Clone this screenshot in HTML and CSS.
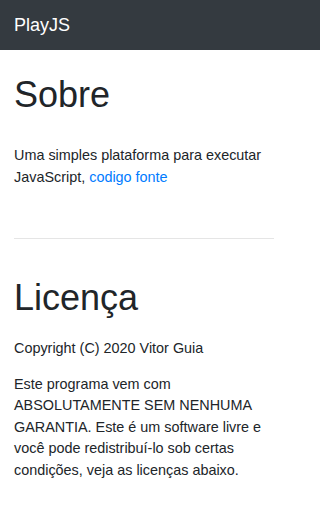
FILE: index.html
```html
<!DOCTYPE html>
<html lang="pt">
<head>
<meta charset="utf-8">
<meta name="viewport" content="width=device-width, initial-scale=1">
<link rel="stylesheet" href="styles.css">
</head>
<body>
<nav class="navbar"><div class="navbar-inner"><span class="brand">PlayJS</span></div></nav>
<main class="content">
  <section class="about">
    <h1 class="title">Sobre</h1>
    <p class="text">Uma simples plataforma para executar JavaScript, <a class="link" href="#">codigo fonte</a></p>
  </section>
  <hr class="divider">
  <section class="license">
    <h1 class="title">Licença</h1>
    <p class="text copyright">Copyright (C) 2020 Vitor Guia</p>
    <p class="text">Este programa vem com ABSOLUTAMENTE SEM NENHUMA GARANTIA. Este é um software livre e você pode redistribuí-lo sob certas condições, veja as licenças abaixo.</p>
  </section>
</main>
</body>
</html>
```
FILE: styles.css
```css
* { box-sizing: border-box; }
html, body { margin: 0; padding: 0; }
body {
  font-family: "Liberation Sans", Arial, sans-serif;
  font-size: 14.4px;
  line-height: 21.6px;
  color: #212529;
  background: #fff;
}
.navbar {
  height: 50px;
  background: #343a40;
}
.navbar-inner {
  width: 288px;
  height: 100%;
  display: flex;
  align-items: center;
  padding: 0 14px;
}
.brand {
  color: #fff;
  font-size: 18px;
  line-height: 27px;
  margin-top: 1px;
}
.content {
  width: 288px;
  padding: 0 14px;
}
.title {
  font-size: 36px;
  font-weight: 400;
  line-height: 43.2px;
  margin: 0;
  color: #212529;
}
.about .title { margin-top: 23px; margin-bottom: 29px; }
.text { margin: 0 0 14.4px; }
.about .text { margin-bottom: 0; }
.link { color: #007bff; text-decoration: none; }
.divider {
  border: 0;
  border-top: 1px solid #e5e5e5;
  margin: 50px 0 37px;
}
.license .title { margin-bottom: 18px; }
```
